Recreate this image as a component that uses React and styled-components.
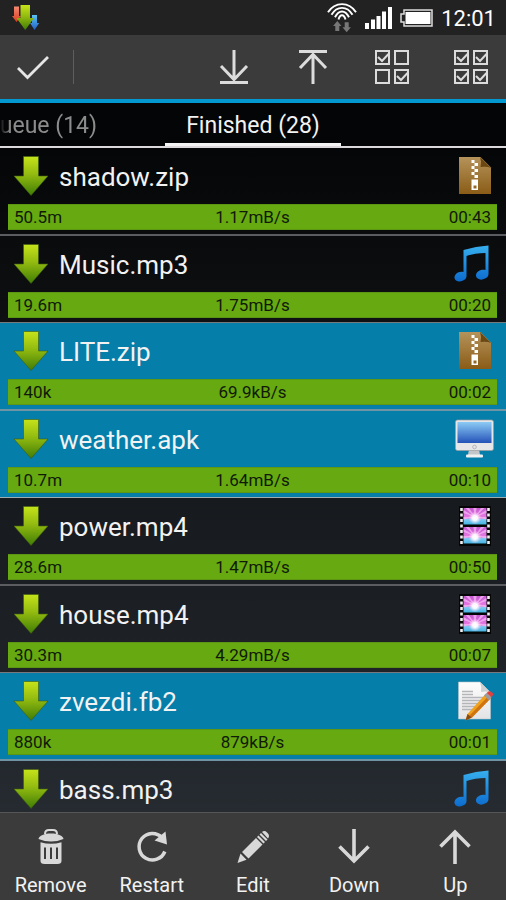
import React, { useState } from 'react';
import styled, { createGlobalStyle } from 'styled-components';

const GlobalStyle = createGlobalStyle`
  * {
    box-sizing: border-box;
  }

  body {
    margin: 0;
    background: #000;
    color: #f2f2f2;
    font-family: Roboto, 'Noto Sans', sans-serif;
  }

  button {
    margin: 0;
    padding: 0;
    border: 0;
    background: none;
    color: inherit;
    font: inherit;
    cursor: pointer;
  }

  svg {
    display: block;
    flex: none;
  }
`;

const Screen = styled.div`
  display: flex;
  flex-direction: column;
  height: 100vh;
  overflow: hidden;
`;

const StatusBar = styled.header`
  display: flex;
  flex: none;
  align-items: center;
  justify-content: space-between;
  height: 35px;
  padding: 0 10px 0 12px;
  background: #222;
`;

const StatusIcons = styled.div`
  display: flex;
  align-items: center;
  gap: 8px;
`;

const Clock = styled.time`
  padding-top: 2px;
  font-size: 22px;
  line-height: 35px;
  color: #fff;
`;

const Toolbar = styled.div`
  display: flex;
  flex: none;
  align-items: center;
  height: 68px;
  border-bottom: 4px solid #0398cf;
  background: #3b3b3b;
`;

const DoneButton = styled.button`
  display: flex;
  align-items: center;
  justify-content: flex-end;
  width: 50px;
  height: 64px;
`;

const Divider = styled.span`
  width: 1px;
  height: 34px;
  margin-left: 23px;
  background: #5e5e5e;
`;

const ToolGroup = styled.div`
  display: flex;
  gap: 9px;
  margin-left: auto;
`;

const ToolButton = styled.button`
  display: flex;
  align-items: center;
  justify-content: center;
  width: 70px;
  height: 64px;
`;

const Tabs = styled.nav`
  display: grid;
  flex: none;
  grid-template-columns: minmax(0, 1fr) 176px minmax(0, 1fr);
  height: 45px;
  border-bottom: 2px solid #dcd8dc;
  background: #040506;
`;

const Tab = styled.button`
  display: flex;
  justify-content: ${({ $active }) => ($active ? 'center' : 'flex-end')};
  height: 43px;
  padding-right: ${({ $active }) => ($active ? 0 : 68)}px;
  border-bottom: ${({ $active }) => ($active ? '3px solid #f4f4f4' : '0')};
  overflow: hidden;
  font-size: 23px;
  line-height: 45px;
  white-space: nowrap;
  color: ${({ $active }) => ($active ? '#f2f2f2' : '#8c8c8c')};
  ${({ $active }) => !$active && 'mask-image: linear-gradient(90deg, transparent, #000 10px);'}
`;

const List = styled.ul`
  flex: 1;
  min-height: 0;
  margin: 0;
  padding: 0;
  overflow-y: auto;
  scrollbar-width: none;
  list-style: none;
  background: linear-gradient(#050607, #262b31);
`;

const Row = styled.li`
  border-bottom: 1px solid ${({ $selected }) => ($selected ? '#a0adb5' : '#77797d')};
  background: ${({ $selected }) => ($selected ? '#057eaa' : 'transparent')};
  cursor: pointer;

  &:nth-child(odd) {
    border-bottom-width: 2px;
    border-bottom-color: ${({ $selected }) => ($selected ? '#6f94a3' : '#5b5c5f')};
  }
`;

const RowHead = styled.div`
  display: flex;
  align-items: center;
  gap: 9px;
  height: 56px;
  padding: 0 12px;
`;

const FileName = styled.span`
  flex: 1;
  padding-top: 2px;
  font-size: 26px;
  line-height: 40px;
`;

const Progress = styled.div`
  display: grid;
  grid-template-columns: 1fr auto 1fr;
  height: 26px;
  margin: 0 9px 4px 8px;
  padding: 0 6px;
  border: 1px solid #5d9612;
  border-width: 1px 0;
  background: #66a911;
  font-size: 17px;
  line-height: 25px;
  color: #101a06;

  & span:last-child {
    text-align: right;
  }
`;

const BottomBar = styled.footer`
  display: grid;
  flex: none;
  grid-template-columns: repeat(5, 1fr);
  height: 88px;
  border-top: 1px solid #565656;
  background: #3b3b3b;
`;

const Action = styled.button`
  display: flex;
  flex-direction: column;
  align-items: center;
  gap: 4px;
  padding-top: 14px;
  font-size: 20px;
  line-height: 28px;
`;

// gradients used by the file icons, declared once for the whole page
const Gradients = () => (
  <svg width="0" height="0" aria-hidden="true">
    <defs>
      <linearGradient id="green" x1="0" y1="0" x2="0" y2="1">
        <stop offset="0" stopColor="#c6e31a" />
        <stop offset="0.45" stopColor="#93bb10" />
        <stop offset="1" stopColor="#3f7d05" />
      </linearGradient>
      <linearGradient id="red" x1="0" y1="0" x2="0" y2="1">
        <stop offset="0" stopColor="#f58a72" />
        <stop offset="1" stopColor="#d93a1e" />
      </linearGradient>
      <linearGradient id="blue" x1="0" y1="0" x2="0" y2="1">
        <stop offset="0" stopColor="#5cc3f2" />
        <stop offset="1" stopColor="#1f5fc8" />
      </linearGradient>
      <linearGradient id="brown" x1="0" y1="0" x2="0" y2="1">
        <stop offset="0" stopColor="#b5935a" />
        <stop offset="1" stopColor="#8a5c17" />
      </linearGradient>
      <linearGradient id="note" gradientUnits="userSpaceOnUse" x1="0" y1="2" x2="0" y2="38">
        <stop offset="0" stopColor="#36aeee" />
        <stop offset="1" stopColor="#0c6bcf" />
      </linearGradient>
      <linearGradient id="monitor" x1="0" y1="0" x2="0" y2="1">
        <stop offset="0" stopColor="#8ccbf5" />
        <stop offset="1" stopColor="#2452b8" />
      </linearGradient>
      <linearGradient id="frame" x1="0" y1="0" x2="0" y2="1">
        <stop offset="0" stopColor="#c557d2" />
        <stop offset="0.6" stopColor="#e87ce4" />
        <stop offset="0.7" stopColor="#7cc8f2" />
        <stop offset="1" stopColor="#45b4e0" />
      </linearGradient>
      <radialGradient id="glow">
        <stop offset="0" stopColor="#fff" />
        <stop offset="0.4" stopColor="#fff" stopOpacity="0.9" />
        <stop offset="1" stopColor="#fbd3fa" stopOpacity="0" />
      </radialGradient>
      <linearGradient id="paper" x1="0" y1="0" x2="0" y2="1">
        <stop offset="0" stopColor="#fdfdfd" />
        <stop offset="1" stopColor="#e4e4e6" />
      </linearGradient>
    </defs>
  </svg>
);

const AppLogo = () => (
  <svg width="28" height="27" viewBox="0 0 28 27" aria-hidden="true">
    <path d="M2 2.500h5V12h2l-4.500 6L0 12h2z" fill="url(#red)" />
    <path d="M20 11h5v8h2.200L22.500 26 18 19h2z" fill="url(#blue)" />
    <path d="M8.500 1h9.500v13h4L13.200 26 4.500 14h4z" fill="url(#green)" />
  </svg>
);

const WifiIcon = () => (
  <svg width="30" height="30" viewBox="0 0 30 30" aria-hidden="true">
    <g fill="none" stroke="#fff" strokeWidth="1.900">
      <path d="M1 9.200C8-1.600 22-1.600 29 9.200" />
      <path d="M4.500 11.800C10 2.600 20 2.600 25.500 11.800" />
      <path d="M8 14.200C12 6.600 18 6.600 22 14.200" />
      <path d="M11.500 16.500C13 10.800 17 10.800 18.500 16.500" />
    </g>
    <path d="M10.300 18l4.200 5h-2.200v5h-4v-5H6.100z" fill="#777" />
    <path d="M19.700 29.200l-4.200-5h2.200v-5h4v5h2.200z" fill="#777" />
  </svg>
);

const SignalIcon = () => (
  <svg width="27" height="22" viewBox="0 0 27 22" fill="#fff" aria-hidden="true">
    <path d="M0 16h4v6H0zM6 12.500h4V22H6zM11.500 9h4v13h-4zM17 4.500h4V22h-4zM23 0h4v22h-4z" />
  </svg>
);

const BatteryIcon = () => (
  <svg width="33" height="18" viewBox="0 0 33 18" aria-hidden="true">
    <path d="M4 1h28v16H4v-4H1V5h3z" fill="none" stroke="#ddd" strokeWidth="1.500" />
    <path d="M5.500 3h25v12h-25z" fill="#fff" />
  </svg>
);

const CheckIcon = () => (
  <svg width="34" height="26" viewBox="0 0 34 26" fill="none" stroke="#e6e6e6" strokeWidth="2.800" aria-hidden="true">
    <path d="M2 14l9.500 9.500L32 3" />
  </svg>
);

const ToBottomIcon = () => (
  <svg width="30" height="36" viewBox="0 0 30 36" fill="none" stroke="#dcdcdc" strokeWidth="3" aria-hidden="true">
    <path d="M15 1v28M2 17l13 13.500L28 17M1 33.500h28" />
  </svg>
);

const ToTopIcon = () => (
  <svg width="30" height="36" viewBox="0 0 30 36" fill="none" stroke="#dcdcdc" strokeWidth="3" aria-hidden="true">
    <path d="M15 35V7M2 19L15 5.500 28 19M1 2.500h28" />
  </svg>
);

const BOXES = [[1, 1], [20, 1], [1, 20], [20, 20]];

const BoxesIcon = ({ checked }) => (
  <svg width="36" height="36" viewBox="0 0 36 36" fill="none" stroke="#dcdcdc" strokeWidth="2" aria-hidden="true">
    {BOXES.map(([x, y], i) => (
      <g key={i} transform={`translate(${x} ${y})`}>
        <path d="M1 1h13v13H1z" />
        {checked.includes(i) && <path d="M3 7l4 4 6.500-7" />}
      </g>
    ))}
  </svg>
);

const ArrowIcon = () => (
  <svg width="38" height="40" viewBox="0 0 38 40" aria-hidden="true">
    <path d="M11.500.500h15V20H36L19 39.500 2 20h9.500z" fill="url(#green)" stroke="#3d5a10" strokeWidth="0.600" />
  </svg>
);

const ZipIcon = () => (
  <svg width="40" height="40" viewBox="0 0 40 40" aria-hidden="true">
    <path d="M5 1h21.500L37 11.500V38H5z" fill="url(#brown)" />
    <path d="M26 1l11 11q-4-2-10.500-1Q28 6 26 1z" fill="#6b4714" />
    <path
      d="M17.500 4h3v3h-3zM20.500 7h3.500v3h-3.500zM17.500 10h3v3h-3zM20.500 13h3.500v3h-3.500zM17.500 16h3v3h-3zM20.500 19h3.500v3h-3.500z"
      fill="#fff"
    />
    <path d="M17.500 23.500H24V34h-6.500zM19.500 29.500v3h3v-3z" fill="#fff" fillRule="evenodd" />
  </svg>
);

const MusicIcon = () => (
  <svg width="40" height="40" viewBox="0 0 40 40" fill="url(#note)" aria-hidden="true">
    <path d="M9.500 6Q22 2 34.500 1.500V30a6 5 0 0 1-3.500 4.500C27 37 22.500 35 22 32c-.500-4 4.500-7.500 9.500-6V9Q21 9 12.500 12v20A6 5 0 0 1 9 36.500C5 38.800 1 37 .500 34 0 30.500 4.500 26.500 9.500 28z" />
  </svg>
);

const MonitorIcon = () => (
  <svg width="40" height="40" viewBox="0 0 40 40" aria-hidden="true">
    <path d="M15 30h10l1 6H14z" fill="#c4c6ca" />
    <rect x="12" y="35.500" width="17" height="3" rx="1" fill="#f1f1f1" />
    <rect x="1.500" y="1" width="38" height="30.500" rx="2" fill="#e6e6e8" stroke="#9c9da0" strokeWidth="0.700" />
    <path d="M3.500 3h34v21h-34z" fill="url(#monitor)" />
    <circle cx="20.500" cy="28" r="1.800" fill="none" stroke="#b5b5b8" />
  </svg>
);

const Frame = ({ y }) => (
  <g transform={`translate(9.500 ${y})`}>
    <path d="M0 0h23v16.500H0z" fill="url(#frame)" />
    <path
      d="M11.500 9L0 2v3zM11.500 9L2 0h3.500zM11.500 9L9.800 0h3.400zM11.500 9L17.500 0H21zM11.500 9L23 2v3zM11.500 9L0 9v2.500zM11.500 9L23 9v2.500z"
      fill="#f6b5f3"
      opacity="0.750"
    />
    <circle cx="11.500" cy="10" r="6.500" fill="url(#glow)" />
  </g>
);

const FilmIcon = () => (
  <svg width="40" height="40" viewBox="0 0 40 40" aria-hidden="true">
    <path d="M5 0h32v40H5z" fill="#050505" />
    <path d="M7.500 2v36M34.500 2v36" stroke="#f0f0f0" strokeWidth="2.600" strokeDasharray="3 2.500" />
    <Frame y={2} />
    <Frame y={21} />
  </svg>
);

const TextIcon = () => (
  <svg width="40" height="40" viewBox="0 0 40 40" aria-hidden="true">
    <path d="M4.500 1H26l10.500 10.500V38h-32z" fill="url(#paper)" stroke="#b9c2c6" strokeWidth="0.600" />
    <path d="M26 1l10.500 10.500q-4-1.500-9.500-.500 1-5-1-10z" fill="#cfd0d2" />
    <path
      d="M8 10.500h11M8 13.500h11M8 16.500h23M8 19.500h21M8 22.500h18M8 25.500h15M8 28.500h12"
      stroke="#b4b5b8"
      strokeWidth="1.400"
    />
    <path d="M32 12.500l5 4.500L18 36.500 11.500 39.500 13.500 33z" fill="#f0a21e" />
    <path d="M34.500 15l2.500 2L18 36.500l-2.500-2z" fill="#cf7410" />
    <path d="M13.500 33l4.500 3.500-6.500 3z" fill="#8a4a12" />
    <path d="M30 14.500l2.500-2.500 5 4.500-2.500 2.800z" fill="#9a9da0" />
    <path d="M32.500 12l2-1.500q3-1 5 2.500l-2 3.500z" fill="#e0413f" />
  </svg>
);

const RemoveIcon = () => (
  <svg width="40" height="40" viewBox="0 0 40 40" fill="#d8d8d8" aria-hidden="true">
    <path d="M14 7q0-4 4-4h4q4 0 4 4" fill="none" stroke="#d8d8d8" strokeWidth="2" />
    <path d="M7.500 12C8 4.500 32 4.500 32.500 12q-12.500 5-25 0z" />
    <path
      d="M9.500 15.200q10.500 3 21 0V34q0 3-4 3h-13q-4 0-4-3zM13 20.500v11.500h2V20.500zM19 20.500v11.500h2V20.500zM25 20.500v11.500h2V20.500z"
      fillRule="evenodd"
    />
  </svg>
);

const RestartIcon = () => (
  <svg width="40" height="40" viewBox="0 0 40 40" aria-hidden="true">
    <path d="M32.800 24.500A13.300 13.300 0 1 1 30 10.500" fill="none" stroke="#d8d8d8" strokeWidth="3.500" />
    <path d="M33.500 4.500L35 17.500L22.500 13.500z" fill="#d8d8d8" />
  </svg>
);

const EditIcon = () => (
  <svg width="40" height="40" viewBox="0 0 40 40" fill="#d8d8d8" aria-hidden="true">
    <path d="M4.500 36l3-9.500 6 6.300zM9 25L23 11l6.500 6.500-14 14zM24 10l1.500-1.500L32 15l-1.500 1.500zM26.500 7.500L28 6l6.500 6.500L33 14zM29 5q2.500-2 5 .500l1 1q2 2.500 0 5z" />
  </svg>
);

const DownIcon = () => (
  <svg width="40" height="40" viewBox="0 0 40 40" fill="none" stroke="#d8d8d8" strokeWidth="3.600" aria-hidden="true">
    <path d="M20 2v32M5.500 19.500L20 34l14.500-14.500" />
  </svg>
);

const UpIcon = () => (
  <svg width="40" height="40" viewBox="0 0 40 40" fill="none" stroke="#d8d8d8" strokeWidth="3.600" aria-hidden="true">
    <path d="M20 37V5M5.500 19.500L20 5l14.500 14.500" />
  </svg>
);

const FILE_ICONS = {
  zip: ZipIcon,
  mp3: MusicIcon,
  apk: MonitorIcon,
  mp4: FilmIcon,
  fb2: TextIcon,
};

const DOWNLOADS = [
  { name: 'shadow.zip', size: '50.5m', speed: '1.17mB/s', time: '00:43' },
  { name: 'Music.mp3', size: '19.6m', speed: '1.75mB/s', time: '00:20' },
  { name: 'LITE.zip', size: '140k', speed: '69.9kB/s', time: '00:02' },
  { name: 'weather.apk', size: '10.7m', speed: '1.64mB/s', time: '00:10' },
  { name: 'power.mp4', size: '28.6m', speed: '1.47mB/s', time: '00:50' },
  { name: 'house.mp4', size: '30.3m', speed: '4.29mB/s', time: '00:07' },
  { name: 'zvezdi.fb2', size: '880k', speed: '879kB/s', time: '00:01' },
  { name: 'bass.mp3' },
];

const ACTIONS = [
  { label: 'Remove', Icon: RemoveIcon },
  { label: 'Restart', Icon: RestartIcon },
  { label: 'Edit', Icon: EditIcon },
  { label: 'Down', Icon: DownIcon },
  { label: 'Up', Icon: UpIcon },
];

const DownloadRow = ({ item, selected, onToggle }) => {
  const FileIcon = FILE_ICONS[item.name.split('.').pop()];
  return (
    <Row role="option" aria-selected={selected} $selected={selected} onClick={onToggle}>
      <RowHead>
        <ArrowIcon />
        <FileName>{item.name}</FileName>
        <FileIcon />
      </RowHead>
      {item.size && (
        <Progress>
          <span>{item.size}</span>
          <span>{item.speed}</span>
          <span>{item.time}</span>
        </Progress>
      )}
    </Row>
  );
};

const App = () => {
  const [selected, setSelected] = useState(['LITE.zip', 'weather.apk', 'zvezdi.fb2']);

  const toggle = (name) => {
    setSelected((prev) => (prev.includes(name) ? prev.filter((v) => v !== name) : [...prev, name]));
  };

  // everything that was selected becomes unselected and the other way round
  const invert = () => {
    setSelected((prev) => DOWNLOADS.map((v) => v.name).filter((name) => !prev.includes(name)));
  };

  return (
    <Screen>
      <GlobalStyle />
      <Gradients />
      <StatusBar>
        <AppLogo />
        <StatusIcons>
          <WifiIcon />
          <SignalIcon />
          <BatteryIcon />
          <Clock>12:01</Clock>
        </StatusIcons>
      </StatusBar>

      <Toolbar>
        <DoneButton aria-label="Done" onClick={() => setSelected([])}>
          <CheckIcon />
        </DoneButton>
        <Divider />
        <ToolGroup>
          <ToolButton aria-label="Move to bottom">
            <ToBottomIcon />
          </ToolButton>
          <ToolButton aria-label="Move to top">
            <ToTopIcon />
          </ToolButton>
          <ToolButton aria-label="Invert selection" onClick={invert}>
            <BoxesIcon checked={[0, 3]} />
          </ToolButton>
          <ToolButton aria-label="Select all" onClick={() => setSelected(DOWNLOADS.map((v) => v.name))}>
            <BoxesIcon checked={[0, 1, 2, 3]} />
          </ToolButton>
        </ToolGroup>
      </Toolbar>

      <Tabs>
        <Tab>Queue (14)</Tab>
        <Tab $active>Finished (28)</Tab>
      </Tabs>

      <List role="listbox" aria-multiselectable="true" aria-label="Finished downloads">
        {DOWNLOADS.map((item) => (
          <DownloadRow
            key={item.name}
            item={item}
            selected={selected.includes(item.name)}
            onToggle={() => toggle(item.name)}
          />
        ))}
      </List>

      <BottomBar>
        {ACTIONS.map(({ label, Icon }) => (
          <Action key={label}>
            <Icon />
            {label}
          </Action>
        ))}
      </BottomBar>
    </Screen>
  );
};

export default App;
